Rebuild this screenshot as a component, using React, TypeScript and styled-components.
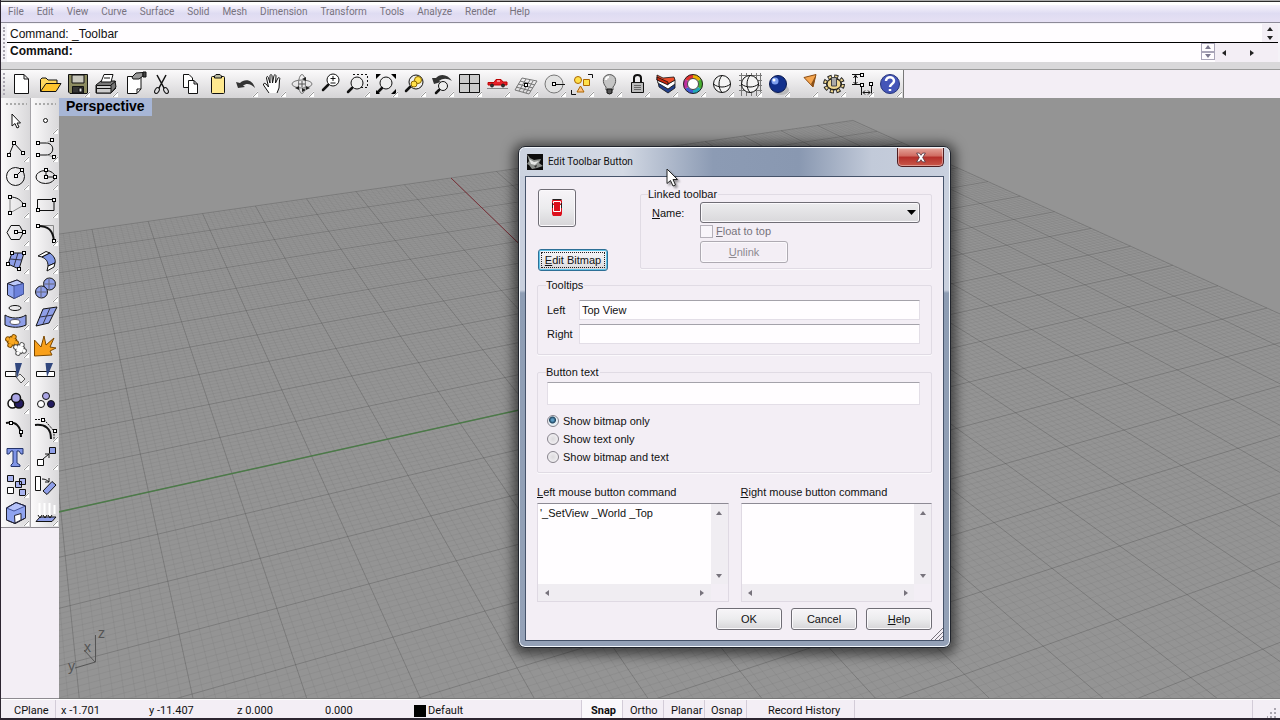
import React, { ReactNode, useState } from "react";
import styled, { createGlobalStyle, css } from "styled-components";

const uiFont = `"Liberation Sans", Arial, sans-serif`;
const menuFont = `Roboto, "Open Sans", sans-serif`;
const face = "#f3eef5";

const GlobalStyle = createGlobalStyle`
  * { box-sizing: border-box; }
  body { margin: 0; font-family: ${uiFont}; font-size: 11px; color: #111; }
  button, input, select, textarea { font: inherit; color: inherit; }
`;

const Page = styled.div`
  min-height: 100vh;
  display: flex;
  flex-direction: column;
  background: ${face};
  border-left: 1px solid #2c2430;
  overflow: hidden;
`;

const TopEdge = styled.div`
  height: 5px;
  background: linear-gradient(#aaa 0 1px, #2b2b2b 1px 2px, #fff 2px);
`;

const MenuBar = styled.nav`
  display: flex;
  gap: 13px;
  height: 18px;
  padding-left: 7px;
  background: linear-gradient(#f6f3fd, #dfdcf2 50%, #e6e0f4);
  border-bottom: 1px solid #8d8a98;
  font: 10px/14px ${menuFont};
`;

const MenuLink = styled.a`
  color: #77727e;
  text-decoration: none;
`;

const CommandArea = styled.section`
  display: flex;
  height: 39px;
  padding: 1px 2px 0 0;
  background: #f4f2f7;
  font: 12px/16px ${uiFont};
`;

const SideGrip = styled.div`
  width: 2px;
  margin: 3px 2px;
  border-left: 2px dotted #aaa6b0;
`;

const CommandLines = styled.div`
  flex: 1;
`;

const HistoryLine = styled.div`
  display: flex;
  justify-content: space-between;
  height: 19px;
  padding-left: 3px;
  line-height: 20px;
  background: #fffdff;
  border-bottom: 1px solid #000;
`;

const PromptLine = styled.label`
  display: flex;
  height: 19px;
  padding-left: 3px;
  background: #fffdff;
  font-weight: bold;
  line-height: 17px;
`;

const PromptInput = styled.input`
  flex: 1;
  min-width: 0;
  border: 0;
  outline: 0;
  background: transparent;
`;

const ArrowStack = styled.div`
  display: flex;
  flex-direction: column;
  width: 16px;
  background: ${face};
`;

const Spinner = styled.div`
  display: flex;
  flex-direction: column;
  width: 14px;
  height: 17px;
`;

const ArrowRow = styled.div`
  display: flex;
  width: 63px;
  padding-right: 16px;
  background: ${face};
`;

const TinyButton = styled.button<{ $framed?: boolean }>`
  display: flex;
  flex: 1;
  align-items: center;
  justify-content: center;
  min-height: 0;
  padding: 0;
  border: ${p => (p.$framed ? "1px solid #a9a5b8" : "0")};
  background: transparent;
`;

const SideArrow = styled(TinyButton)`
  flex: none;
  width: 17px;
  & + & { margin-left: 11px; }
`;

const TopToolbar = styled.div`
  display: flex;
  height: 36px;
  padding-top: 7px;
  background: #d9d8da;
`;

const ToolbarRow = styled.div`
  display: flex;
  flex: 1;
  background: ${face};
  border-top: 1px solid #9a9a9a;
`;

const ToolGroup = styled.div`
  display: flex;
  background: linear-gradient(#fbfafb, #d5d4d6);
  border-right: 1px solid #777;
`;

const ToolButton = styled.button`
  display: block;
  flex: none;
  width: 28px;
  height: 28px;
  padding: 0;
  border: 0;
  background: transparent;
  svg { display: block; }
`;

const Workspace = styled.main`
  display: flex;
  flex: 1;
  min-height: 600px;
`;

const SidePanel = styled.aside`
  display: flex;
  flex: none;
  align-items: flex-start;
  width: 58px;
  border-bottom: 1px solid #8d8a90;
`;

const ToolColumn = styled.div`
  width: 29px;
  padding-left: 1px;
  background: linear-gradient(90deg, #fbfafb, #d9d8da);
  border-bottom: 1px solid #8d8a90;
  & + & { border-left: 1px solid #a5a3a8; padding-left: 0; }
`;

const TopGrip = styled.div`
  height: 9px;
  margin: 0 3px;
  background: radial-gradient(circle, #aaa 1px, transparent 1px) 0 4px / 4px 4px repeat-x;
`;

const Viewport = styled.section`
  position: relative;
  flex: 1;
  overflow: hidden;
  background: #949494;
  border-bottom: 1px solid #777;
`;

const Scene = styled.svg`
  position: absolute;
  inset: 0;
  width: 100%;
  height: 100%;
`;

const ViewLabel = styled.h1`
  position: relative;
  width: 93px;
  height: 18px;
  margin: 0;
  padding-left: 7px;
  background: #a7b6d6;
  color: #000;
  font: bold 14px/17px ${uiFont};
`;

const StatusBar = styled.footer`
  display: flex;
  height: 21px;
  border-top: 1px solid #fff;
  border-bottom: 2px solid #2c2430;
  background: ${face};
  font: 11px/16px Roboto, sans-serif;
`;

const StatusCell = styled.div<{ $width: number; $pad?: number; $line?: boolean; $bold?: boolean }>`
  display: flex;
  flex: none;
  align-items: center;
  gap: 2px;
  width: ${p => p.$width}px;
  padding: 4px 0 0 ${p => p.$pad ?? 5}px;
  white-space: nowrap;
  ${p => p.$line && css`border-right: 1px solid #d3ccd8;`}
  ${p => p.$bold && css`font-weight: bold; background: #faf8fb;`}
`;

const StatusFill = styled.div`
  flex: 1;
  border-right: 1px solid #d3ccd8;
`;

const Swatch = styled.span`
  width: 12px;
  height: 12px;
  background: #000;
`;

const Dialog = styled.section`
  position: absolute;
  left: 518px;
  top: 146px;
  width: 433px;
  padding: 0 6px 6px;
  border: 1px solid #20242c;
  border-radius: 7px;
  background: linear-gradient(#c9d0de 0 143px, #8e9db4 146px, #94a1b7);
  box-shadow: inset 0 0 0 1px #f2f6fb, 0 2px 12px 5px rgba(0, 0, 0, 0.55);
`;

const TitleBar = styled.header`
  display: flex;
  align-items: center;
  height: 28px;
  margin: 1px -5px 0;
  padding: 0 5px 0 7px;
  gap: 5px;
  border-radius: 6px 6px 0 0;
  background: linear-gradient(90deg, #ccd3e0, #d3d9e4 24%, #8c9bb4 45%, #8998b1 65%, #c2cad9 82%, #c9d0de);
`;

const Title = styled.h2`
  flex: 1;
  margin: 0;
  color: #111;
  font: 10px/16px ${menuFont};
`;

const CloseButton = styled.button`
  align-self: flex-start;
  display: flex;
  align-items: center;
  justify-content: center;
  width: 47px;
  height: 19px;
  padding: 0;
  border: 1px solid #4e1d21;
  border-top: 0;
  border-radius: 0 0 5px 5px;
  background: linear-gradient(#e5a49a, #cf6a60 45%, #b42e29 50%, #c9584a);
  box-shadow: inset 0 0 0 1px rgba(255, 255, 255, 0.4);
`;

const Client = styled.form`
  display: flex;
  flex-direction: column;
  padding: 10px 11px;
  border: 1px solid #46536a;
  background: ${face};
  line-height: 14px;
`;

const TopRow = styled.div`
  display: flex;
`;

const BitmapColumn = styled.div`
  display: flex;
  flex: none;
  flex-direction: column;
  align-items: flex-start;
  gap: 22px;
  width: 103px;
  padding: 2px 0 0 1px;
`;

const buttonFace = css`
  border: 1px solid #6f6d75;
  border-radius: 3px;
  background: linear-gradient(#f7f5f8, #ececee 50%, #d6d5d8);
  box-shadow: inset 0 0 0 1px #fbf9fc;
`;

const BitmapButton = styled.button`
  ${buttonFace}
  width: 38px;
  height: 38px;
  padding: 0 4px;
  svg { display: block; }
`;

const PushButton = styled.button<{ $width: number; $focused?: boolean }>`
  ${buttonFace}
  width: ${p => p.$width}px;
  height: 22px;
  padding: 0;
  line-height: 18px;
  ${p => p.$focused && css`
    border-color: #2d6f96;
    box-shadow: inset 0 0 0 1px #62c6ea;
    outline: 1px dotted #222;
    outline-offset: -4px;
  `}
  &:disabled {
    color: #8d8990;
    background: ${face};
    border-color: #aeaab2;
  }
`;

const Group = styled.fieldset<{ $gap?: number }>`
  min-width: 0;
  margin: ${p => p.$gap ?? 0}px 0 0;
  padding: 0 11px 0 8px;
  border: 1px solid #e0dbe4;
  border-radius: 2px;
  box-shadow: 0 1px 0 #fbf9fc;
`;

const LinkedGroup = styled(Group)`
  flex: 1;
  padding-left: 7px;
  height: 82px;
`;

const Legend = styled.legend`
  height: 14px;
  padding: 0 1px 0 0;
`;

const NameRow = styled.div`
  display: flex;
  align-items: center;
  padding: 1px 0 0 4px;
`;

const FieldLabel = styled.label<{ $width: number }>`
  flex: none;
  width: ${p => p.$width}px;
`;

const Select = styled.select`
  ${buttonFace}
  flex: 1;
  min-width: 0;
  height: 21px;
  appearance: none;
  background: linear-gradient(#ececee, #d9d8db);
`;

const SelectBox = styled.div`
  display: flex;
  flex: 1;
  position: relative;
  svg { position: absolute; right: 4px; top: 8px; }
`;

const LinkedRest = styled.div`
  display: flex;
  flex-direction: column;
  align-items: flex-start;
  gap: 2px;
  padding: 0 0 0 52px;
`;

const CheckLabel = styled.label`
  display: flex;
  align-items: center;
  gap: 3px;
  height: 16px;
  color: #77737c;
`;

const CheckBox = styled.input`
  width: 13px;
  height: 13px;
  margin: 0;
  appearance: none;
  border: 1px solid #b5b1ba;
  background: #f8f5fa;
`;

const FieldRow = styled.div`
  display: flex;
  align-items: center;
  padding-left: 1px;
  margin-bottom: 4px;
`;

const TextInput = styled.input<{ $height: number }>`
  display: block;
  width: 100%;
  min-width: 0;
  height: ${p => p.$height}px;
  padding: 0 2px;
  border: 1px solid #e3dee7;
  border-top-color: #a4a2aa;
  background: #fffdff;
`;

const TipBody = styled.div`
  padding: 8px 0 6px;
`;

const TextBody = styled.div`
  padding: 3px 0 6px 1px;
`;

const RadioLabel = styled.label`
  display: flex;
  align-items: center;
  gap: 4px;
  height: 18px;
`;

const RadioSet = styled.div`
  padding-top: 7px;
`;

const Radio = styled.input`
  width: 12px;
  height: 12px;
  margin: 0;
  appearance: none;
  border: 1px solid #87838c;
  border-radius: 50%;
  background: radial-gradient(#dcdadd, #f8f6f9);
  &:checked {
    background: radial-gradient(circle at 45% 40%, #5d9cc4 0 1px, #1d4460 3px, #e8f0f5 4px);
  }
`;

const CommandsRow = styled.div`
  display: grid;
  grid-template-columns: 1fr 1fr;
  gap: 12px;
  padding-top: 12px;
`;

const CommandLabel = styled.label`
  display: block;
  height: 18px;
`;

const ScrollFrame = styled.div`
  display: grid;
  grid-template-columns: 1fr 17px;
  grid-template-rows: 80px 17px;
  border: 1px solid #dfd9e3;
  border-top-color: #8d8a94;
`;

const CommandText = styled.textarea`
  display: block;
  min-width: 0;
  width: 100%;
  height: 100%;
  padding: 2px;
  border: 0;
  outline: 0;
  resize: none;
  overflow: hidden;
  background: #fffdff;
  line-height: 15px;
`;

const ScrollTrack = styled.div<{ $vertical?: boolean }>`
  display: flex;
  flex-direction: ${p => (p.$vertical ? "column" : "row")};
  justify-content: space-between;
  background: #f0edf2;
`;

const ScrollButton = styled.button`
  display: flex;
  align-items: center;
  justify-content: center;
  width: 17px;
  height: 17px;
  padding: 0;
  border: 0;
  background: transparent;
`;

const Footer = styled.div`
  display: flex;
  justify-content: flex-end;
  gap: 9px;
  padding-top: 6px;
`;

const ResizeGrip = styled.svg`
  position: absolute;
  right: 7px;
  bottom: 7px;
`;

const Pointer = styled.svg`
  position: absolute;
  left: 666px;
  top: 168px;
  filter: drop-shadow(2px 2px 1px rgba(0, 0, 0, 0.4));
`;

/* ---------- small drawing helpers ---------- */

type Dir = "up" | "down" | "left" | "right";
const arrowPath: Record<Dir, string> = {
  up: "M1 6L4 2L7 6Z",
  down: "M1 2L7 2L4 6Z",
  left: "M6 1L2 4L6 7Z",
  right: "M2 1L6 4L2 7Z",
};
const Arrow = ({ dir, color = "#222" }: { dir: Dir; color?: string }) => (
  <svg width="8" height="8" aria-hidden="true"><path d={arrowPath[dir]} fill={color} /></svg>
);

const Node = ({ at }: { at: [number, number][] }) => (
  <>
    {at.map(([x, y]) => (
      <rect key={`${x}-${y}`} x={x - 1.5} y={y - 1.5} width="3" height="3" fill="#fff" stroke="#000" strokeWidth="1" />
    ))}
  </>
);

const Handle = ({ d }: { d: string }) => <path d={d} strokeWidth="2.5" strokeLinecap="round" />;

/* A jigsaw piece: a square body with four round tabs, outlined as one shape. */
const Puzzle = ({ x, y, fill, line }: { x: number; y: number; fill: string; line: string }) => {
  const parts = (
    <>
      <rect x="-3" y="-3" width="6" height="6" />
      <circle cx="0" cy="-4.500" r="1.800" />
      <circle cx="0" cy="4.500" r="1.800" />
      <circle cx="-4.500" cy="0" r="1.800" />
      <circle cx="4.500" cy="0" r="1.800" />
    </>
  );
  return (
    <g transform={`translate(${x} ${y}) rotate(25)`}>
      <g fill={line} stroke={line} strokeWidth="2">{parts}</g>
      <g fill={fill} stroke="none">{parts}</g>
    </g>
  );
};

const blue = "#8f9fe8";

type Tool = { name: string; art: ReactNode; menu?: boolean };

const topTools: Tool[] = [
  { name: "New", art: <path d="M7.500 4.500H17L21.500 9V23.500H7.500ZM17 4.500V9H21.500" fill="#fff" /> },
  { name: "Open", art: <g><path d="M5.500 21V9.500L7 8H11L13 10H22V13" fill="#ffd75e" /><path d="M5.500 21.500L11 13.500H26L21 21.500Z" fill="#ffc52e" /></g> },
  { name: "Save", menu: true, art: <g><path d="M5.500 4.500H24.500V23.500H7L5.500 22Z" fill="#8c8b60" /><path d="M9 5H21V13H9Z" fill="#c9c8bd" /><path d="M9.500 16.500H20.500V23H9.500Z" fill="#333" /><path d="M16 18H19V22H16Z" fill="#ddd" /></g> },
  { name: "Print", menu: true, art: <g><path d="M5 15L10 11H24L25 17L20 23H5Z" fill="#777" /><path d="M10 12L13 4.500H22L20 12Z" fill="#fff" /><path d="M5.500 15.500H20V23H5.500ZM5 18.500H20" fill="#ccc" /><path d="M13 8H19M20 15L25 11M21 22L25 18" /></g> },
  { name: "Document properties", art: <g><path d="M8.500 6.500H22V19L18 23.500H8.500ZM18 23V19H22" fill="#fff" /><path d="M13 7L17 3L24 2.500V6L20 9H14Z" fill="#999" /><path d="M24 2V7H27V2Z" fill="#444" /></g> },
  { name: "Cut", art: <g fill="none"><path d="M10 5L17 18M19 5L12 18" strokeWidth="1.500" /><ellipse cx="10" cy="20.500" rx="2" ry="3.200" transform="rotate(30 10 20.500)" /><ellipse cx="19" cy="20.500" rx="2" ry="3.200" transform="rotate(-30 19 20.500)" /></g> },
  { name: "Copy", art: <g><path d="M8.500 4.500H14L17.500 8V17.500H8.500Z" fill="#fff" /><path d="M13.500 10.500H19L22.500 14V23.500H13.500ZM19 10.500V14H22.500" fill="#fff" /></g> },
  { name: "Paste", art: <g><rect x="8.500" y="6.500" width="13" height="17" rx="1" fill="#ffe98f" /><path d="M11.500 8V6L13 4.500H17L18.500 6V8Z" fill="#b9b9a0" /></g> },
  { name: "Undo", menu: true, art: <path d="M5 12L7 18L14 17L12 15.500C16 12.500 20 14 24 18C22 10 14 8 9 13Z" fill="#333" stroke="none" /> },
  { name: "Pan", menu: true, art: <path d="M10 23L4.500 15C4 13 6 13 7 14L9.500 17L7.500 8C7.500 6 9 6 9.500 8L11 13L11 6C11 4 13 4 13 6L13.500 13L15 5.500C16 4 17 5 17 6L16.500 13L19 8C20 7 21.500 8 20.500 10L20 18L18 23" fill="#fff" /> },
  { name: "Rotate view", menu: true, art: <g fill="none"><ellipse cx="15" cy="14" rx="10" ry="4" stroke="#777" /><ellipse cx="15" cy="14" rx="3.500" ry="9.500" stroke="#777" /><path d="M8 18L12 16V20ZM23 18L19 16V20ZM15 9L19 7V11ZM19 20L15 22V18Z" fill="#222" stroke="none" /><path d="M15 11V17M12 14H18" stroke="#555" /></g> },
  { name: "Zoom dynamic", art: <g><circle cx="18" cy="10" r="6" fill="#fff" /><path d="M15.500 8.500H20.500M18 6V11M15.500 13H20.500" /><Handle d="M13 15L8 20" /></g> },
  { name: "Zoom window", menu: true, art: <g><path d="M10 4.500H24.500V17.500H18" fill="none" strokeDasharray="2 2" /><circle cx="14" cy="13" r="6" fill="#eee" /><Handle d="M9 18L5 22" /></g> },
  { name: "Zoom extents", menu: true, art: <g><circle cx="15" cy="13" r="6" fill="#eee" /><Handle d="M11 18L7 22" /><path d="M5 4H10L5 9ZM25 4H20L25 9ZM25 24H20L25 19ZM5 24V20L9 24Z" fill="#000" stroke="none" /></g> },
  { name: "Zoom selected", menu: true, art: <g><circle cx="17" cy="12" r="7" fill="#eee" /><circle cx="19" cy="10" r="3.500" fill="#ffe04a" stroke="#860" /><circle cx="15" cy="14" r="3" fill="#ffe04a" stroke="#860" /><Handle d="M11 17L7 21" /></g> },
  { name: "Undo view change", menu: true, art: <g><path d="M5 8L7 14L14 12L12 11C16 8 20 8 25 11C21 4 13 3 9 8Z" fill="#333" stroke="none" /><circle cx="16" cy="16" r="4.500" fill="#eee" /><Handle d="M12 20L9 23" /></g> },
  { name: "Four viewports", menu: true, art: <path d="M4.500 4.500H24.500V22.500H4.500ZM14.500 4.500V22.500M4.500 13.500H24.500" fill="#ccc" /> },
  { name: "Right view", menu: true, art: <g stroke="#b00"><path d="M5 14.500V12.500H11L13 9.500H18L20 12H24V15H5Z" fill="#e8202a" /><path d="M14 11H17" stroke="#fff" /><circle cx="9" cy="15.500" r="1.500" fill="#333" stroke="#222" /><circle cx="20" cy="15.500" r="1.500" fill="#333" stroke="#222" /><path d="M4 18.500H25" stroke="#888" /></g> },
  { name: "Set CPlane", menu: true, art: <g stroke="#777"><path d="M11 8L26 11L18 24L4 20ZM9 11L24 15M7 14L22 18M5 17L20 21M15 9L8 21M19 10L12 22M22 11L15 23" fill="none" /><Node at={[[15, 15]]} /></g> },
  { name: "Object snap", menu: true, art: <g><circle cx="15" cy="14" r="9" fill="#e2e2e2" stroke="#777" /><path d="M15 14.500H26" /><Node at={[[15, 14]]} /></g> },
  { name: "Select", menu: true, art: <g><circle cx="11" cy="10" r="3.500" fill="#ffe04a" stroke="#a60" /><path d="M16.500 9.500H22.500V15.500H16.500Z" fill="#ffe04a" stroke="#a60" /><path d="M13.500 16L17 22H10Z" fill="#ffc080" stroke="#a60" /><path d="M21 4.500H25.500V8M4.500 20V24.500H9" fill="none" /></g> },
  { name: "Hide", menu: true, art: <g><path d="M11 17C7 13 7 5 14.500 4.500C22 5 22 13 18 17V20H11Z" fill="#c4c4c4" stroke="#555" /><path d="M11 10C11 8 12 7 14 7" stroke="#fff" fill="none" strokeWidth="2" /><path d="M12 19H17V23L14.500 24L12 23Z" fill="#555" /></g> },
  { name: "Lock", menu: true, art: <g><path d="M11 13V8C11 4 18 4 18 8V13" fill="none" strokeWidth="2" /><path d="M8.500 12.500H20.500V22.500H8.500Z" fill="#bbb" /><path d="M11 15.500H18M11 17.500H18M11 19.500H18" stroke="#666" /></g> },
  { name: "Layers", menu: true, art: <g strokeWidth=".8"><path d="M7 12L17 19L24 14V18L17 23L8 17Z" fill="#23418c" /><path d="M6 9L17 14L24 10V14L17 19L7 13Z" fill="#fff" /><path d="M6 5L12 8L23 7L24 10L17 14L6 10Z" fill="#f0502c" /><path d="M6 7L17 12V15L6 10Z" fill="#c8280e" /></g> },
  { name: "Color wheel", menu: true, art: <g fill="none" strokeWidth="4"><path d="M14 6.500A7.500 7.500 0 0 1 20.500 10" stroke="#e8b000" /><path d="M20.500 10A7.500 7.500 0 0 1 20.500 18" stroke="#48b030" /><path d="M20.500 18A7.500 7.500 0 0 1 14 21.500" stroke="#20a8b8" /><path d="M14 21.500A7.500 7.500 0 0 1 7.500 18" stroke="#4058d0" /><path d="M7.500 18A7.500 7.500 0 0 1 7.500 10" stroke="#c030a0" /><path d="M7.500 10A7.500 7.500 0 0 1 14 6.500" stroke="#e03030" /><circle cx="14" cy="14" r="9.500" strokeWidth="1" stroke="#222" /><circle cx="14" cy="14" r="5.500" strokeWidth="1" stroke="#444" fill="#fff" /></g> },
  { name: "Wireframe", menu: true, art: <g><circle cx="15" cy="14" r="8.500" fill="#f4f4f4" /><path d="M15 5.500C11 10 11 18 15 22.500M6.500 14C11 18 19 18 23.500 14" fill="none" /></g> },
  { name: "Shaded", menu: true, art: <g><path d="M4 5.500H27M4 10.500H27M4 15.500H27M4 20.500H27M6.500 3V26M11.500 3V26M16.500 3V26M21.500 3V26M25.500 3V26" stroke="#777" /><circle cx="15" cy="14" r="8.500" fill="#f4f4f4" /><path d="M15 5.500C11 10 11 18 15 22.500M6.500 14C11 18 19 18 23.500 14" fill="none" /></g> },
  { name: "Render", menu: true, art: <g><ellipse cx="18" cy="20" rx="8" ry="5" fill="#999" stroke="none" opacity=".5" /><circle cx="15" cy="14" r="8.500" fill="#12308c" stroke="#0a1a50" /><circle cx="12" cy="11" r="3.500" fill="#7ea0f0" stroke="none" /><circle cx="11" cy="10" r="1.500" fill="#fff" stroke="none" /></g> },
  { name: "Spotlight", menu: true, art: <g><path d="M13 7.500L25 4.500L22 17Z" fill="#f5a650" stroke="#8a4a10" /><path d="M25 5L22 17L20 14Z" fill="#8a5018" stroke="none" /></g> },
  { name: "Options", menu: true, art: <g fill="none"><ellipse cx="15" cy="14" rx="8.500" ry="7" stroke="#222" strokeWidth="5" strokeDasharray="3.800 2.300" /><ellipse cx="15" cy="14" rx="8.500" ry="7" stroke="#f0d890" strokeWidth="3" strokeDasharray="2.200 3.900" strokeDashoffset="-.8" /><ellipse cx="15" cy="14" rx="7.500" ry="6" fill="#f0d890" stroke="#222" /><ellipse cx="15" cy="14" rx="7" ry="5.500" fill="#f0d890" /><path d="M12.500 7.500H17.500V16H12.500Z" fill="#aaa" stroke="#444" /></g> },
  { name: "Dimension", menu: true, art: <g fill="none"><path d="M5 4.500H15M8.500 6V14M5 14.500H14M14.500 17V25M24.500 16V25M16 22.500H23M6.500 8L8.500 5L10.500 8M6.500 12L8.500 14L10.500 12M18 20.500L16 22.500L18 24.500M21 20.500L23 22.500L21 24.500" /><Node at={[[15, 5], [15, 15], [24, 14]]} /></g> },
  { name: "Help topics", menu: true, art: <g><circle cx="15" cy="14" r="9.500" fill="#4556b8" stroke="#26357c" /><path d="M11 11C11 6 19 6 19 11C19 14 15 14 15 17M15 19V21" fill="none" stroke="#fff" strokeWidth="2.500" /></g> },
];

const leftTools: Tool[] = [
  { name: "Pointer", art: <path d="M10 7V19L13 16.500L15 21L17 20L15 16H18.500Z" fill="#fff" /> },
  { name: "Polyline", menu: true, art: <g><path d="M7 20L12 8L21 18" fill="none" /><Node at={[[7, 20], [12, 8], [21, 18]]} /></g> },
  { name: "Circle", menu: true, art: <g><circle cx="13.500" cy="13.500" r="9" fill="none" /><path d="M14 13L20 7" /><Node at={[[14, 13], [20, 7]]} /></g> },
  { name: "Arc", menu: true, art: <g><path d="M8 6C15 6 19 9 22 14" fill="none" /><path d="M8 6V22L22 14" fill="none" stroke="#888" /><Node at={[[8, 6], [22, 14], [8, 22]]} /></g> },
  { name: "Polygon", menu: true, art: <g><path d="M9 6.500H17.500L21.500 13.500L17.500 20.500H9L5 13.500Z" fill="none" /><path d="M14 13.500H22" /><Node at={[[14, 13], [22, 13]]} /></g> },
  { name: "Surface", menu: true, art: <g><path d="M10 6H22L17 22L6 17Z" fill={blue} /><path d="M8 12L20 13M16 6L12 19" stroke="#334" /><Node at={[[10, 6], [22, 6], [6, 17], [17, 22]]} /></g> },
  { name: "Box", menu: true, art: <g stroke="#223"><path d="M5.500 8.500L15 5L21.500 8.500V19L12 23.500L5.500 20Z" fill="#8fa4f0" /><path d="M5.500 8.500L12 11L21.500 8.500L15 5Z" fill="#bcc8fa" /><path d="M12 11V23.500L21.500 19V8.500Z" fill="#6d82dc" stroke="#44559c" /></g> },
  { name: "Revolve", menu: true, art: <g><ellipse cx="13" cy="5" rx="6" ry="2.500" fill="none" /><path d="M3 12C9 16 18 16 24 12V22C18 25 9 25 3 22Z" fill={blue} /><ellipse cx="13" cy="19" rx="5" ry="2.500" fill="#fff" stroke="#556" /></g> },
  { name: "Solid tools", menu: true, art: <g><Puzzle x={10} y={10} fill="#f9a822" line="#7a4a00" /><Puzzle x={18} y={18} fill="#fff" line="#555" /></g> },
  { name: "Trim", menu: true, art: <g><path d="M3.500 12.500H14V17.500H3.500Z" fill="#fff" /><path d="M14 18L18 15L23 20L19 24Z" fill="#eee" stroke="#555" /><path d="M13 4H20L15 19Z" fill="#31477e" stroke="none" /></g> },
  { name: "Group", menu: true, art: <g strokeWidth="1.500"><circle cx="10.500" cy="16.500" r="4.500" fill="#fff" /><circle cx="17" cy="16.500" r="4.500" fill="#241c60" /><circle cx="14" cy="11" r="4.500" fill="#a9a4e4" /></g> },
  { name: "Edit points", art: <g><path d="M4 8C14 6 19 11 19 22" fill="none" strokeWidth="2" /><Node at={[[9, 8], [19, 17]]} /></g> },
  { name: "Text", menu: true, art: <path d="M5 5.500H21V11H19L17 8H15V20L18 22V23.500H9V22L11 20V8H9L7 11H5Z" fill="#7f94e6" stroke="#24346c" /> },
  { name: "Array", menu: true, art: <g><path d="M5.500 4.500H11.500V10.500H5.500ZM17.500 7.500H23.500V13.500H17.500ZM17.500 18.500H23.500V24.500H17.500ZM13.500 10.500H19.500V16.500H13.500Z" fill="#a9b4f0" /><path d="M5.500 16.500H11.500V22.500H5.500Z" fill="#fff" /></g> },
  { name: "Block", menu: true, art: <g stroke="#223"><path d="M4.500 9L14 3.500L23.500 7V19L13 24.500L4.500 21Z" fill="#8fa4f0" /><path d="M4.500 9L12 12L23.500 7L14 3.500Z" fill="#b5c2fa" stroke="#44559c" /><path d="M4.500 9L14 3.500L23.500 7V19L13 24.500L4.500 21Z" fill="none" /><path d="M12.500 16.500L19 14.500V21L13 24Z" fill="#fff" /></g> },
];

const rightTools: Tool[] = [
  { name: "Point", menu: true, art: <circle cx="14.500" cy="13.500" r="2" fill="#fff" /> },
  { name: "Curve", menu: true, art: <g><path d="M7 8H15C24 8 24 20 15 20H7" fill="none" /><path d="M15 8L21 5M16 20L23 22" stroke="#999" /><Node at={[[7, 8], [21, 5], [7, 20], [23, 22]]} /></g> },
  { name: "Ellipse", menu: true, art: <g><ellipse cx="14.500" cy="14" rx="9.500" ry="6.500" fill="none" /><path d="M15 7V14H24" fill="none" /><Node at={[[15, 7], [15, 14], [24, 14]]} /></g> },
  { name: "Rectangle", menu: true, art: <g><path d="M6.500 8.500H23V19.500H6.500Z" fill="none" /><Node at={[[23, 9], [7, 19]]} /></g> },
  { name: "Fillet", menu: true, art: <g><path d="M7 6.500H22.500V22" stroke="#888" fill="none" /><path d="M7 7C17 7 22 11 23 22" fill="none" strokeWidth="2" /><Node at={[[7, 7], [23, 22]]} /></g> },
  { name: "Extrude", menu: true, art: <g><path d="M7 9L15 4.500L19 6L11 10Z" fill="#fff" /><path d="M11 10L19 6C23 9 25 13 24 16L17 19C17 14 15 12 11 10Z" fill="#8096e4" /><path d="M17 19L24 16L23 20L16 24Z" fill="#fff" /></g> },
  { name: "Sphere", menu: true, art: <g fill={blue}><circle cx="18.500" cy="9" r="6" /><path d="M18 3V15M12 9H25" stroke="#667" /><circle cx="10.500" cy="17" r="6" /><path d="M10 11V23M5 17H16" stroke="#667" /></g> },
  { name: "Surface tools", menu: true, art: <g><path d="M12 6L26 4L18 20L5 23Z" fill={blue} /><path d="M9 14L22 12M19 5L12 21" stroke="#334" fill="none" /></g> },
  { name: "Explode", art: <path d="M3.500 25V9L10 16L13 5L15 14L23 7L19 16L25 17L19 20L21 24Z" fill="#f9a01b" stroke="#7a4700" /> },
  { name: "Split", art: <g><path d="M5.500 12.500H23.500V17.500H5.500Z" fill="#fff" /><path d="M14.500 4H22L16 18Z" fill="#31477e" stroke="none" /></g> },
  { name: "Ungroup", art: <g><circle cx="15" cy="9" r="3.500" fill="#a9a4e4" /><circle cx="10" cy="17" r="3.500" fill="#fff" /><circle cx="20" cy="17" r="3.500" fill="#241c60" /></g> },
  { name: "Control points", menu: true, art: <g><path d="M4 10C14 9 20 13 20 24" fill="none" strokeWidth="2" /><path d="M4 4.500H13L23 16V25" fill="none" strokeDasharray="2 1" /><Node at={[[12, 5], [24, 16]]} /></g> },
  { name: "Move", menu: true, art: <g><path d="M6.500 16.500H12.500V22.500H6.500Z" fill="#fff" /><path d="M18.500 4.500H24.500V10.500H18.500Z" fill={blue} /><path d="M12 16L18 11M14 11H18V15" fill="none" /></g> },
  { name: "Rotate", art: <g><path d="M4.500 5.500H9.500V19.500H4.500Z" fill="#fff" /><path d="M12 20L21 10.500L25 14L16 23.500Z" fill={blue} /><path d="M11 8C14 8 16 9 18 11M18 7V11H14" fill="none" /></g> },
  { name: "Project", menu: true, art: <g><path d="M9 18H25L21 22.500H5Z" fill={blue} /><path d="M8.500 4V17M13.500 4V17M18.500 4V17M23.500 6V15" stroke="#fff" strokeWidth="2" /><path d="M7 16L9 19L11 16M12 16L14 19L16 16M17 16L19 19L21 16" fill="none" /></g> },
];

const ToolIcon = ({ tool }: { tool: Tool }) => (
  <ToolButton type="button" aria-label={tool.name}>
    <svg width="28" height="28" viewBox="0 0 28 28" fill="#000" stroke="#111" aria-hidden="true">
      {tool.art}
      {tool.menu && <g stroke="none"><path d="M27 21V27H21Z" fill="#fff" /><path d="M22 27L27 22" stroke="#999" /></g>}
    </svg>
  </ToolButton>
);

/* ---------- construction plane grid ---------- */

const project = (k: number, m: number) => {
  const w = 1 + 0.02105 * k + 0.0445 * m;
  return `${((659 + 76.05 * k - 0.73 * m) / w).toFixed(1)} ${((379 - 5.79 * k - 12.18 * m) / w).toFixed(1)}`;
};

const gridPath = (major: boolean) => {
  let d = "";
  for (let i = -100; i <= 100; i++) {
    if ((i % 10 === 0) !== major) continue;
    const t = i / 10;
    d += `M${project(t, -10)}L${project(t, 10)}M${project(-10, t)}L${project(10, t)}`;
  }
  return d;
};

const minorGrid = gridPath(false);
const majorGrid = gridPath(true);

const Key = ({ children }: { children: string }) => <u>{children}</u>;

const ScrollText = ({ id, text }: { id: string; text: string }) => (
  <ScrollFrame>
    <CommandText id={id} defaultValue={text} spellCheck={false} wrap="off" />
    <ScrollTrack $vertical>
      <ScrollButton type="button" aria-label="Scroll up"><Arrow dir="up" color="#77737c" /></ScrollButton>
      <ScrollButton type="button" aria-label="Scroll down"><Arrow dir="down" color="#77737c" /></ScrollButton>
    </ScrollTrack>
    <ScrollTrack>
      <ScrollButton type="button" aria-label="Scroll left"><Arrow dir="left" color="#77737c" /></ScrollButton>
      <ScrollButton type="button" aria-label="Scroll right"><Arrow dir="right" color="#77737c" /></ScrollButton>
    </ScrollTrack>
  </ScrollFrame>
);

const EditButtonDialog = () => {
  const [mode, setMode] = useState("Show bitmap only");
  return (
    <Dialog role="dialog" aria-labelledby="dialog-title">
      <TitleBar>
        <svg width="16" height="16" aria-hidden="true">
          <path d="M0 0H16V16H0Z" fill="#0c0c0c" />
          <path d="M0 0L3 4L7 6L14 5L12 9L16 12L10 14L5 15L2 11L0 10L2 7Z" fill="#8d918d" />
          <path d="M2 5L7 8L12 7L8 11L4 10Z" fill="#e4e6e4" />
          <path d="M7 12L10 11L9 14Z" fill="#333" />
        </svg>
        <Title id="dialog-title">Edit Toolbar Button</Title>
        <CloseButton type="button" aria-label="Close">
          <svg width="14" height="11" viewBox="0 0 12 10"><path d="M2 1H4.500L6 3L7.500 1H10L7.500 5L10 9H7.500L6 7L4.500 9H2L4.500 5Z" fill="#fff" stroke="#5a3a44" strokeWidth=".8" /></svg>
        </CloseButton>
      </TitleBar>
      <Client onSubmit={e => e.preventDefault()}>
        <TopRow>
          <BitmapColumn>
            <BitmapButton type="button" aria-label="Button bitmap">
              <svg width="28" height="28" viewBox="0 0 28 28">
                <path d="M9 7L10 5H18L19 7V20L18 22H10L9 20Z" fill="#dc0f1c" />
                <path d="M9.500 5.500H18.500M9.500 9V14M18.500 9V14" stroke="#222" />
                <path d="M10.500 9.500V7.500H17.500V9.500" stroke="#fff" fill="none" />
                <path d="M10.500 11V17.500H17.500V11" stroke="#fff" fill="none" />
              </svg>
            </BitmapButton>
            <PushButton type="button" $width={70} $focused><Key>E</Key>dit Bitmap</PushButton>
          </BitmapColumn>
          <LinkedGroup>
            <Legend>Linked toolbar</Legend>
            <NameRow>
              <FieldLabel htmlFor="linked-name" $width={48}><Key>N</Key>ame:</FieldLabel>
              <SelectBox>
                <Select id="linked-name"><option aria-label="None"></option></Select>
                <svg width="9" height="6" aria-hidden="true"><path d="M0 0H9L4.500 5Z" /></svg>
              </SelectBox>
            </NameRow>
            <LinkedRest>
              <CheckLabel><CheckBox type="checkbox" disabled /><span><Key>F</Key>loat to top</span></CheckLabel>
              <PushButton type="button" $width={88} disabled><Key>U</Key>nlink</PushButton>
            </LinkedRest>
          </LinkedGroup>
        </TopRow>
        <Group $gap={7}>
          <Legend>Tooltips</Legend>
          <TipBody>
            <FieldRow>
              <FieldLabel htmlFor="tip-left" $width={32}>Left</FieldLabel>
              <TextInput id="tip-left" $height={20} defaultValue="Top View" />
            </FieldRow>
            <FieldRow>
              <FieldLabel htmlFor="tip-right" $width={32}>Right</FieldLabel>
              <TextInput id="tip-right" $height={20} />
            </FieldRow>
          </TipBody>
        </Group>
        <Group $gap={10}>
          <Legend>Button text</Legend>
          <TextBody>
            <TextInput $height={23} aria-label="Button text" />
            <RadioSet>
              {["Show bitmap only", "Show text only", "Show bitmap and text"].map(label => (
                <RadioLabel key={label}>
                  <Radio type="radio" name="mode" checked={mode === label} onChange={() => setMode(label)} />
                  {label}
                </RadioLabel>
              ))}
            </RadioSet>
          </TextBody>
        </Group>
        <CommandsRow>
          <div>
            <CommandLabel htmlFor="left-command"><Key>L</Key>eft mouse button command</CommandLabel>
            <ScrollText id="left-command" text="'_SetView _World _Top" />
          </div>
          <div>
            <CommandLabel htmlFor="right-command"><Key>R</Key>ight mouse button command</CommandLabel>
            <ScrollText id="right-command" text="" />
          </div>
        </CommandsRow>
        <Footer>
          <PushButton type="submit" $width={66}>OK</PushButton>
          <PushButton type="button" $width={66}>Cancel</PushButton>
          <PushButton type="button" $width={66}><Key>H</Key>elp</PushButton>
        </Footer>
      </Client>
      <ResizeGrip width="12" height="12" aria-hidden="true">
        <path d="M0 12L12 0M4 12L12 4M8 12L12 8" stroke="#77737c" />
      </ResizeGrip>
    </Dialog>
  );
};

const menus = ["File", "Edit", "View", "Curve", "Surface", "Solid", "Mesh", "Dimension", "Transform", "Tools", "Analyze", "Render", "Help"];

export default function App() {
  return (
    <Page>
      <GlobalStyle />
      <TopEdge />
      <MenuBar>
        {menus.map(name => <MenuLink key={name} href="#">{name}</MenuLink>)}
      </MenuBar>
      <CommandArea>
        <SideGrip />
        <CommandLines>
          <HistoryLine>
            Command: _Toolbar
            <ArrowStack>
              <TinyButton type="button" aria-label="History up"><Arrow dir="up" /></TinyButton>
              <TinyButton type="button" aria-label="History down"><Arrow dir="down" /></TinyButton>
            </ArrowStack>
          </HistoryLine>
          <PromptLine>
            Command:
            <PromptInput />
            <Spinner>
              <TinyButton type="button" $framed aria-label="Previous"><Arrow dir="up" color="#7d7990" /></TinyButton>
              <TinyButton type="button" $framed aria-label="Next"><Arrow dir="down" color="#7d7990" /></TinyButton>
            </Spinner>
            <ArrowRow>
              <SideArrow type="button" aria-label="Left"><Arrow dir="left" /></SideArrow>
              <SideArrow type="button" aria-label="Right"><Arrow dir="right" /></SideArrow>
            </ArrowRow>
          </PromptLine>
        </CommandLines>
      </CommandArea>
      <TopToolbar>
        <ToolbarRow>
          <ToolGroup>
            <SideGrip />
            {topTools.map(tool => <ToolIcon key={tool.name} tool={tool} />)}
          </ToolGroup>
        </ToolbarRow>
      </TopToolbar>
      <Workspace>
        <SidePanel>
          {[leftTools, rightTools].map((tools, i) => (
            <ToolColumn key={i}>
              <TopGrip />
              {tools.map(tool => <ToolIcon key={tool.name} tool={tool} />)}
            </ToolColumn>
          ))}
        </SidePanel>
        <Viewport>
          <Scene viewBox="59 98 1221 601" preserveAspectRatio="xMinYMin slice" aria-hidden="true">
            <path d={minorGrid} stroke="#5a5a5a" strokeOpacity="0.11" fill="none" />
            <path d={majorGrid} stroke="#484848" strokeOpacity="0.33" fill="none" />
            <path d={`M${project(0, 10)}L${project(0, 0)}`} stroke="#7a3038" />
            <path d={`M${project(-10, 0)}L${project(0, 0)}`} stroke="#4c7a48" strokeWidth="1.500" />
            <path d="M95.500 635V662L75 668M95 662L84 650" stroke="#555" fill="none" />
            <g fill="#555" fontFamily="Liberation Sans, sans-serif" fontSize="14">
              <text x="98" y="638">z</text>
              <text x="84" y="652">x</text>
              <text x="68" y="671">y</text>
            </g>
          </Scene>
          <ViewLabel>Perspective</ViewLabel>
        </Viewport>
      </Workspace>
      <StatusBar>
        <StatusCell $width={55} $pad={13} $line>CPlane</StatusCell>
        <StatusCell $width={88}>x -1.701</StatusCell>
        <StatusCell $width={88}>y -11.407</StatusCell>
        <StatusCell $width={88}>z 0.000</StatusCell>
        <StatusCell $width={89}>0.000</StatusCell>
        <StatusCell $width={173} $line><Swatch />Default</StatusCell>
        <StatusCell $width={41} $pad={9} $line $bold>Snap</StatusCell>
        <StatusCell $width={41} $pad={7} $line>Ortho</StatusCell>
        <StatusCell $width={41} $pad={7} $line>Planar</StatusCell>
        <StatusCell $width={42} $pad={6} $line>Osnap</StatusCell>
        <StatusCell $width={108} $pad={21} $line>Record History</StatusCell>
        <StatusFill />
        <StatusCell $width={27} $pad={14}>
          <svg width="10" height="14" aria-hidden="true"><path d="M8 4V6M8 8V10M8 12V14M4 8V10M4 12V14M0 12V14" stroke="#aaa6b0" strokeWidth="2" /></svg>
        </StatusCell>
      </StatusBar>
      <EditButtonDialog />
      <Pointer width="14" height="20" aria-hidden="true">
        <path d="M1 1V15.500L4.500 12.500L7 18L9.500 17L7 11.500H11.500Z" fill="#fff" stroke="#222" />
      </Pointer>
    </Page>
  );
}
